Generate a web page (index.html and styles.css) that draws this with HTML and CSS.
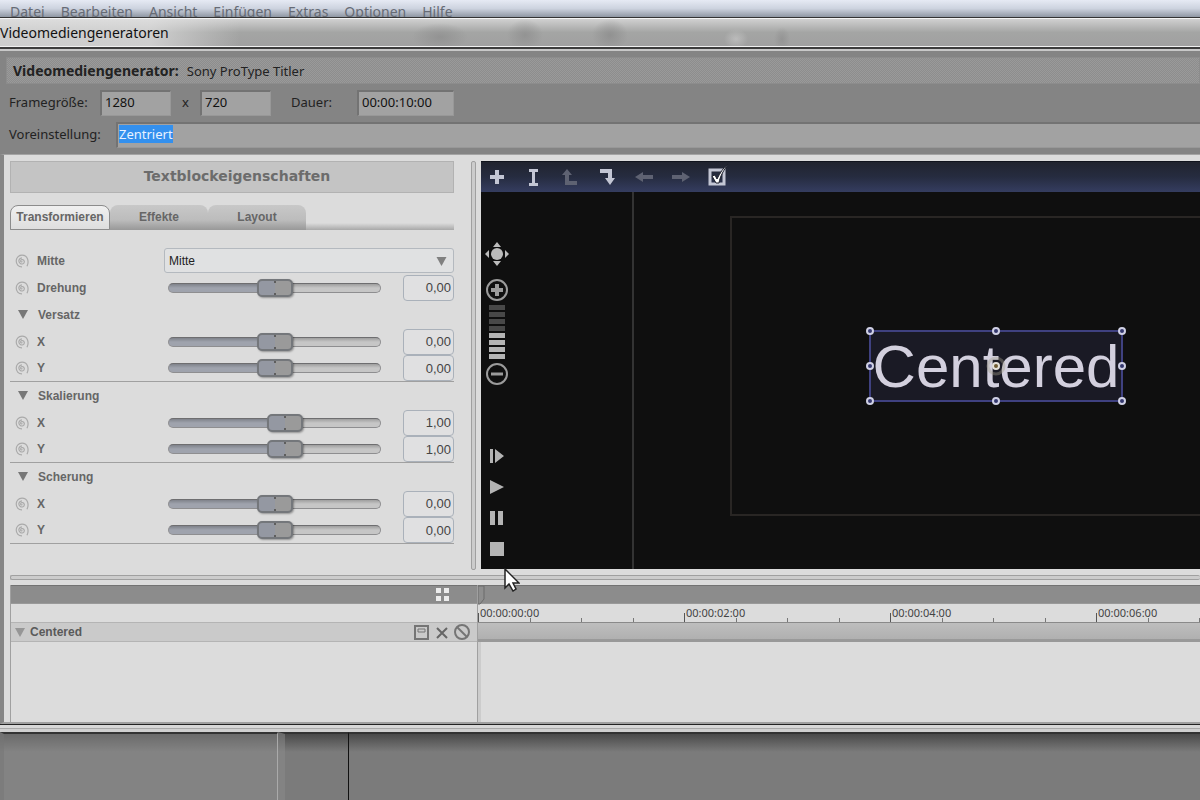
FILE: index.html
```html
<!DOCTYPE html>
<html lang="de">
<head>
    <meta charset="UTF-8">
    <meta name="viewport" content="width=device-width, initial-scale=1.0">
    <title>Videomediengeneratoren</title>
    <link rel="stylesheet" href="styles.css">
</head>
<body>
    <svg class="sprite" aria-hidden="true">
        <symbol id="spiral" viewBox="0 0 14 14">
            <path d="M7.500 7.500c-.8 1-2.300.2-1.800-1 .6-1.600 3.300-1.200 3.600.8.300 2.400-2.500 3.300-4 2.200C2.800 7.600 3.800 4 7 3.800M7 12.800C-.6 13-.8 1.200 7 1.200c5.500 0 7.400 6 5 11" fill="none" stroke="currentColor" stroke-width="1.200"/>
        </symbol>
        <symbol id="triangle" viewBox="0 0 10 9">
            <path d="M0 0h10L5 9z" fill="currentColor"/>
        </symbol>
    </svg>

    <nav class="menubar">
        <a href="#">Datei</a>
        <a href="#">Bearbeiten</a>
        <a href="#">Ansicht</a>
        <a href="#">Einfügen</a>
        <a href="#">Extras</a>
        <a href="#">Optionen</a>
        <a href="#">Hilfe</a>
    </nav>

    <main class="dialog">
        <h1 class="titlebar">Videomediengeneratoren</h1>

        <form class="generator">
            <div class="generator-name"><strong>Videomediengenerator:</strong> <span>Sony ProType Titler</span></div>
            <div class="form-row">
                <label class="size-label" for="frameWidth">Framegröße:</label>
                <input class="field" type="text" id="frameWidth" value="1280">
                <label class="times" for="frameHeight">x</label>
                <input class="field" type="text" id="frameHeight" value="720">
                <label class="duration-label" for="duration">Dauer:</label>
                <input class="field field-duration" type="text" id="duration" value="00:00:10:00">
            </div>
            <div class="form-row">
                <label class="preset-label" for="preset">Voreinstellung:</label>
                <input class="field field-preset" type="text" id="preset" value="Zentriert">
            </div>
        </form>

        <div class="editor">
            <div class="workspace">
                <section class="properties">
                    <h2>Textblockeigenschaften</h2>
                    <div class="tabs">
                        <button type="button" class="tab active">Transformieren</button>
                        <button type="button" class="tab">Effekte</button>
                        <button type="button" class="tab">Layout</button>
                    </div>

                    <div class="rows">
                        <div class="row">
                            <svg class="spiral"><use href="#spiral"/></svg>
                            <label for="anchor">Mitte</label>
                            <div class="select">
                                <select id="anchor"><option>Mitte</option></select>
                                <svg class="select-arrow"><use href="#triangle"/></svg>
                            </div>
                        </div>
                        <div class="row">
                            <svg class="spiral"><use href="#spiral"/></svg>
                            <label for="rotation">Drehung</label>
                            <input type="range" id="rotation" value="50" style="--fill: 50%">
                            <input type="text" class="value" value="0,00" aria-label="Drehung">
                        </div>
                    </div>

                    <div class="rows group">
                        <div class="row">
                            <svg class="triangle"><use href="#triangle"/></svg>
                            <h3>Versatz</h3>
                        </div>
                        <div class="row">
                            <svg class="spiral"><use href="#spiral"/></svg>
                            <label for="offsetX">X</label>
                            <input type="range" id="offsetX" value="50" style="--fill: 50%">
                            <input type="text" class="value" value="0,00" aria-label="Versatz X">
                        </div>
                        <div class="row">
                            <svg class="spiral"><use href="#spiral"/></svg>
                            <label for="offsetY">Y</label>
                            <input type="range" id="offsetY" value="50" style="--fill: 50%">
                            <input type="text" class="value" value="0,00" aria-label="Versatz Y">
                        </div>
                    </div>

                    <div class="rows group">
                        <div class="row">
                            <svg class="triangle"><use href="#triangle"/></svg>
                            <h3>Skalierung</h3>
                        </div>
                        <div class="row">
                            <svg class="spiral"><use href="#spiral"/></svg>
                            <label for="scaleX">X</label>
                            <input type="range" id="scaleX" value="56" style="--fill: 56%">
                            <input type="text" class="value" value="1,00" aria-label="Skalierung X">
                        </div>
                        <div class="row">
                            <svg class="spiral"><use href="#spiral"/></svg>
                            <label for="scaleY">Y</label>
                            <input type="range" id="scaleY" value="56" style="--fill: 56%">
                            <input type="text" class="value" value="1,00" aria-label="Skalierung Y">
                        </div>
                    </div>

                    <div class="rows group">
                        <div class="row">
                            <svg class="triangle"><use href="#triangle"/></svg>
                            <h3>Scherung</h3>
                        </div>
                        <div class="row">
                            <svg class="spiral"><use href="#spiral"/></svg>
                            <label for="shearX">X</label>
                            <input type="range" id="shearX" value="50" style="--fill: 50%">
                            <input type="text" class="value" value="0,00" aria-label="Scherung X">
                        </div>
                        <div class="row">
                            <svg class="spiral"><use href="#spiral"/></svg>
                            <label for="shearY">Y</label>
                            <input type="range" id="shearY" value="50" style="--fill: 50%">
                            <input type="text" class="value" value="0,00" aria-label="Scherung Y">
                        </div>
                    </div>
                </section>

                <div class="splitter"></div>

                <section class="preview">
                    <div class="toolbar">
                        <button type="button" aria-label="Textblock hinzufügen">
                            <svg viewBox="0 0 20 24"><path d="M8 5h4v5h5v4h-5v5H8v-5H3v-4h5z" fill="#c3c6d4"/></svg>
                        </button>
                        <button type="button" aria-label="Text bearbeiten">
                            <svg viewBox="0 0 20 24"><path d="M5 4h9v3h-3v11h3v3H5v-3h3V7H5z" fill="#c3c6d4"/></svg>
                        </button>
                        <button type="button" disabled aria-label="Nach oben">
                            <svg viewBox="0 0 20 24"><path d="M6 4l5 6H8v6h8v4H4v-10H1z" fill="#5e6272"/></svg>
                        </button>
                        <button type="button" aria-label="Nach unten">
                            <svg viewBox="0 0 20 24"><path d="M2 4h12v9h3l-5 7-5-7h3V8H2z" fill="#c3c6d4"/></svg>
                        </button>
                        <button type="button" disabled aria-label="Zurück">
                            <svg viewBox="0 0 20 24"><path d="M0 12l8-5v3h10v4H8v3z" fill="#5e6272"/></svg>
                        </button>
                        <button type="button" disabled aria-label="Vor">
                            <svg viewBox="0 0 20 24"><path d="M18 12l-8-5v3H0v4h10v3z" fill="#5e6272"/></svg>
                        </button>
                        <button type="button" aria-label="Sicherer Bereich">
                            <svg viewBox="0 0 20 24"><path d="M1 5h14v14H1z" fill="none" stroke="#c3c6d4" stroke-width="3"/><path d="M3 11l3-1 2 4c3-6 6-11 11-15-4 6-8 12-9 19H7z" fill="#fff" stroke="#1c1f2b" stroke-width="1"/></svg>
                        </button>
                    </div>
                    <div class="preview-body">
                        <div class="side-tools">
                            <div class="side-group zoom-tools">
                                <button type="button" aria-label="Ansicht verschieben">
                                    <svg width="26" height="26" viewBox="0 0 26 26" fill="#bcbcbc"><circle cx="13" cy="13" r="6"/><path d="M13 1l4 5H9zM13 25l4-5H9zM1 13l4-4v8zM25 13l-4-4v8z"/></svg>
                                </button>
                                <button type="button" aria-label="Vergrößern">
                                    <svg width="24" height="24" viewBox="0 0 24 24" stroke="#9b9b9b" fill="none"><circle cx="12" cy="12" r="10" stroke-width="2"/><path d="M12 6v12M6 12h12" stroke-width="4"/></svg>
                                </button>
                                <div class="zoom-level">
                                    <span></span><span></span><span></span><span></span>
                                    <span class="on"></span><span class="on"></span><span class="on"></span><span class="on"></span>
                                </div>
                                <button type="button" aria-label="Verkleinern">
                                    <svg width="24" height="24" viewBox="0 0 24 24" stroke="#9b9b9b" fill="none"><circle cx="12" cy="12" r="10" stroke-width="2"/><path d="M6 12h12" stroke-width="3"/></svg>
                                </button>
                            </div>
                            <div class="side-group play-tools">
                                <button type="button" aria-label="Von Anfang an">
                                    <svg width="14" height="14" viewBox="0 0 14 14" fill="#b4b4b4"><path d="M0 0h3v14H0zM5 0l9 7-9 7z"/></svg>
                                </button>
                                <button type="button" aria-label="Wiedergabe">
                                    <svg width="14" height="14" viewBox="0 0 14 14" fill="#b4b4b4"><path d="M0 0l14 7-14 7z"/></svg>
                                </button>
                                <button type="button" aria-label="Pause">
                                    <svg width="14" height="14" viewBox="0 0 14 14" fill="#b4b4b4"><path d="M0 0h5v14H0zM8 0h5v14H8z"/></svg>
                                </button>
                                <button type="button" aria-label="Stopp">
                                    <svg width="14" height="14" viewBox="0 0 14 14" fill="#b4b4b4"><path d="M0 0h14v14H0z"/></svg>
                                </button>
                            </div>
                        </div>
                        <div class="stage">
                            <div class="frame">
                                <div class="text-block">
                                    <span>Centered</span>
                                    <svg viewBox="0 0 254 72" aria-hidden="true">
                                        <circle cx="127" cy="36" r="8" fill="none" stroke="#a09a88" stroke-opacity=".4" stroke-width="3"/>
                                        <g fill="#34386e" stroke="#cfd0e4" stroke-width="2">
                                            <circle cx="1" cy="1" r="3"/><circle cx="127" cy="1" r="3"/><circle cx="253" cy="1" r="3"/>
                                            <circle cx="1" cy="36" r="3"/><circle cx="253" cy="36" r="3"/>
                                            <circle cx="1" cy="71" r="3"/><circle cx="127" cy="71" r="3"/><circle cx="253" cy="71" r="3"/>
                                        </g>
                                        <circle cx="127" cy="36" r="3" fill="#6e5b34" stroke="#e4e0da" stroke-width="2"/>
                                    </svg>
                                </div>
                            </div>
                        </div>
                    </div>
                </section>
            </div>

            <div class="splitter splitter-horizontal"></div>

            <section class="timeline">
                <div class="tracks">
                    <div class="band">
                        <button type="button" aria-label="Ansicht">
                            <svg width="13" height="13" viewBox="0 0 13 13" fill="#ececec"><path d="M0 0h5v5H0zM8 0h5v5H8zM0 8h5v5H0zM8 8h5v5H8z"/></svg>
                        </button>
                    </div>
                    <div class="track-space"></div>
                    <div class="track">
                        <svg class="triangle"><use href="#triangle"/></svg>
                        <span class="track-name">Centered</span>
                        <button type="button" aria-label="Spur speichern">
                            <svg width="15" height="15" viewBox="0 0 15 15" fill="none" stroke="#757575"><path d="M1 1h13v13H1z" stroke-width="2"/><path d="M4 4h7v3H4z"/></svg>
                        </button>
                        <button type="button" aria-label="Spur löschen">
                            <svg width="15" height="15" viewBox="0 0 15 15" fill="none" stroke="#666"><path d="M3 3l10 10M13 3L3 13" stroke-width="2"/></svg>
                        </button>
                        <button type="button" aria-label="Spur stummschalten">
                            <svg width="16" height="16" viewBox="0 0 16 16" fill="none" stroke="#757575" stroke-width="2"><circle cx="8" cy="8" r="7"/><path d="M3 3l10 10"/></svg>
                        </button>
                    </div>
                </div>
                <div class="time">
                    <div class="band">
                        <svg width="7" height="19" viewBox="0 0 7 19"><path d="M0 0h6v13l-4 5H0z" fill="#8e8e8e" stroke="#6b6b6b"/></svg>
                    </div>
                    <div class="ruler">
                        <span class="mark">00:00:00:00</span>
                        <span class="mark">00:00:02:00</span>
                        <span class="mark">00:00:04:00</span>
                        <span class="mark">00:00:06:00</span>
                    </div>
                    <div class="lane"></div>
                    <div class="lane-space"></div>
                </div>
            </section>
        </div>
    </main>

    <div class="desktop">
        <div class="pane pane-left"></div>
        <div class="pane pane-middle"></div>
        <div class="pane pane-main"></div>
    </div>

    <svg class="cursor" width="16" height="24" viewBox="0 0 16 24" aria-hidden="true">
        <path d="M1 1v19l4-4 4 7 3-2-3-6h6z" fill="#fff" stroke="#222" stroke-width="1.500"/>
    </svg>

    <script>
        // preset name starts out selected
        document.getElementById('preset').select();
    </script>
</body>
</html>
```
FILE: styles.css
```css
:root {
    --surface: #dcdcdc;
    --dialog-color: #848484;
    --field-color: #a2a2a2;
    --muted-text: #666;
    --line: #a0a0a0;
}

* {
    box-sizing: border-box;
    margin: 0;
    padding: 0;
}

body {
    position: relative;
    display: flex;
    flex-direction: column;
    min-height: 100vh;
    overflow-x: hidden;
    background-color: #7b7b7b;
    color: #222;
    font-family: "Noto Sans", "Open Sans", sans-serif;
    font-size: 13px;
}

button {
    display: flex;
    flex-shrink: 0;
    background: none;
    border: none;
}

input,
select {
    font: inherit;
    color: inherit;
    outline: none;
}

.sprite {
    position: absolute;
    width: 0;
    height: 0;
}

/* Main window menu */
.menubar {
    display: flex;
    gap: 16px;
    height: 17px;
    padding: 3px 10px 0;
    background: linear-gradient(#e6eaf4, #cdd3df 50%, #8f97a3);
}

.menubar a {
    color: #666b75;
    font-size: 14px;
    line-height: 18px;
    text-decoration: none;
}

/* Dialog */
.dialog {
    flex: 1;
    display: flex;
    flex-direction: column;
    border-top: 1px solid #333;
}

.titlebar {
    height: 29px;
    border-top: 1px solid #f4f4f4;
    border-bottom: 1px solid #f0f0f0;
    background:
        radial-gradient(ellipse 28px 14px at 440px 18px, #8889, transparent),
        radial-gradient(ellipse 18px 16px at 525px 16px, #8889, transparent),
        radial-gradient(ellipse 18px 16px at 610px 16px, #888a, transparent),
        radial-gradient(ellipse 12px 10px at 736px 20px, #ccc9, transparent),
        radial-gradient(ellipse 8px 12px at 782px 20px, #8888, transparent),
        linear-gradient(90deg, #e2e2e2b0 150px, #e2e2e200 240px),
        linear-gradient(#d0d0d0, #a4a5a4 50%, #a0a0a0);
    color: #111;
    font-size: 14px;
    font-weight: 400;
    line-height: 28px;
}

.generator {
    display: flex;
    flex-direction: column;
    gap: 6px;
    padding: 6px 0 6px 6px;
    border-top: 2px solid #3c3c3c;
    background-color: var(--dialog-color);
    box-shadow: inset 0 2px #c8c8c8;
}

.generator-name {
    display: flex;
    gap: 8px;
    height: 27px;
    margin-top: 2px;
    padding-left: 6px;
    border: 1px solid #8c8c8c;
    background: repeating-conic-gradient(#9a9a9a 0 25%, #8d8d8d 0 50%) 0 0 / 2px 2px;
    line-height: 26px;
}

.generator-name strong {
    font-size: 14px;
}

.form-row {
    display: flex;
    align-items: center;
    padding-left: 3px;
    line-height: 24px;
}

.form-row label {
    height: 26px;
}

.field {
    width: 71px;
    height: 26px;
    padding: 0 3px 3px;
    border: 1px solid #989898;
    border-top: 2px solid #737373;
    border-left: 2px solid #737373;
    background-color: var(--field-color);
    color: #111;
    line-height: 18px;
}

.field::selection {
    background-color: #3390ee;
    color: #e8f2ff;
}

.field-duration {
    width: 97px;
}

.field-preset {
    flex: 1;
    padding: 0 1px 3px;
    border-right: none;
}

.size-label {
    width: 91px;
}

.times {
    width: 29px;
    text-align: center;
}

.duration-label {
    width: 86px;
    padding-left: 20px;
}

.preset-label {
    width: 107px;
}

/* Editor */
.editor {
    flex: 1;
    display: flex;
    flex-direction: column;
    gap: 5px;
    margin-bottom: 1px;
    padding: 6px 0 0 6px;
    border-top: 1px solid #a4a4a4;
    border-left: 4px solid #868686;
    border-bottom: 2px solid var(--line);
    background-color: var(--surface);
    box-shadow: 0 2px #222;
}

.workspace {
    display: flex;
    gap: 5px;
}

.splitter {
    width: 5px;
    margin-left: 12px;
    border: 1px solid var(--line);
    border-radius: 2px;
    background-color: #ccc;
}

.splitter-horizontal {
    width: auto;
    height: 5px;
    margin-left: 0;
    border-right: none;
}

.properties {
    width: 444px;
    padding-bottom: 26px;
    color: var(--muted-text);
    font-family: "Liberation Sans", Arial, sans-serif;
    font-size: 12px;
}

.properties h2 {
    height: 32px;
    padding-left: 10px;
    border: 1px solid #b2b2b2;
    background-color: #c4c4c4;
    color: #6c6c6c;
    font-family: "DejaVu Sans", Verdana, sans-serif;
    font-size: 14px;
    line-height: 28px;
    text-align: center;
}

.tabs {
    display: flex;
    height: 25px;
    margin: 12px 0 17px;
    background: linear-gradient(transparent 18px, #a8a8a8);
}

.tab {
    justify-content: center;
    align-items: center;
    width: 98px;
    padding-bottom: 1px;
    border-radius: 8px 8px 0 0;
    background: linear-gradient(#c8c8c8, #bcbcbc 60%, #989898);
    color: var(--muted-text);
    font-family: inherit;
    font-size: 12px;
    font-weight: bold;
}

.tab.active {
    width: 100px;
    border: 1px solid #8c8c8c;
    background: linear-gradient(#f0f0f0, #dedede);
}

.rows.group {
    border-bottom: 1px solid var(--line);
}

.row {
    display: flex;
    align-items: center;
    height: 27px;
    padding-left: 5px;
}

.group .row:last-child {
    height: 26px;
}

.row label,
.row h3 {
    width: 127px;
    font-size: 12px;
    font-weight: bold;
}

.spiral {
    width: 14px;
    height: 14px;
    margin-right: 8px;
    color: #aaa;
}

.triangle {
    width: 10px;
    height: 9px;
    margin: 0 10px 0 3px;
    color: #777;
}

.select {
    position: relative;
    flex: 1;
}

.select select {
    width: 100%;
    height: 25px;
    padding-left: 4px;
    appearance: none;
    border: 1px solid #b4b9bf;
    border-radius: 3px;
    background-color: #e0e1e2;
    color: #222;
}

.select-arrow {
    position: absolute;
    top: 9px;
    right: 7px;
    width: 11px;
    height: 9px;
    color: #808080;
    pointer-events: none;
}

input[type="range"] {
    width: 213px;
    height: 20px;
    margin: 0 22px 0 4px;
    appearance: none;
    background: none;
}

input[type="range"]::-webkit-slider-runnable-track {
    height: 10px;
    border: 1px solid #8e8e90;
    border-top-color: #6e6e70;
    border-radius: 5px;
    background:
        linear-gradient(#0003, transparent 50%),
        linear-gradient(90deg, #9fa3ad var(--fill), #c6c6c6 var(--fill));
}

input[type="range"]::-webkit-slider-thumb {
    width: 36px;
    height: 18px;
    margin-top: -5px;
    appearance: none;
    border: 2px solid #74777b;
    border-radius: 5px;
    background:
        linear-gradient(#5e5e5e 2px, transparent 2px 12px, #5e5e5e 12px) 50% 0 / 2px 14px no-repeat,
        linear-gradient(90deg, transparent 50%, #9a9a9a 50%) 0 0 / 100% 100%,
        #9498a2;
    box-shadow: 1px 1px 2px #0005;
}

.value {
    width: 51px;
    height: 26px;
    padding-right: 2px;
    border: 1px solid #aab1ba;
    border-radius: 4px;
    background-color: #e0e0e1;
    color: #444;
    font-size: 13px;
    text-align: right;
}

/* Preview */
.preview {
    flex: 1;
    display: flex;
    flex-direction: column;
    min-width: 0;
    margin-bottom: 1px;
    background-color: #0f0f0f;
}

.toolbar {
    display: flex;
    align-items: center;
    gap: 17px;
    height: 31px;
    padding-left: 6px;
    border-top: 1px solid #10131c;
    background: linear-gradient(#20232e, #262c40 50%, #353d60);
}

.toolbar svg {
    width: 20px;
    height: 24px;
    overflow: visible;
}

.preview-body {
    flex: 1;
    display: flex;
}

.side-tools {
    display: flex;
    flex-direction: column;
    justify-content: space-between;
    width: 153px;
    padding: 49px 3px 13px;
    border-right: 2px solid #333;
}

.side-group {
    display: flex;
    flex-direction: column;
    align-items: center;
    width: 26px;
}

.zoom-tools button:first-child {
    margin-bottom: 11px;
}

.zoom-level {
    display: grid;
    gap: 2px;
    width: 16px;
    margin: 3px 0;
}

.zoom-level span {
    height: 5px;
    background-color: #484848;
}

.zoom-level .on {
    background-color: #b4b4b4;
}

.play-tools {
    gap: 17px;
}

.stage {
    position: relative;
    flex: 1;
    overflow: hidden;
}

.frame {
    position: absolute;
    top: 24px;
    left: 96px;
    width: 532px;
    height: 300px;
    border: 2px solid #292624;
}

.text-block {
    position: absolute;
    top: 112px;
    left: 137px;
    width: 254px;
    height: 72px;
    border: 2px solid #3f4180;
    background-color: #1a1a25;
    color: #d3d0de;
    font-family: "Liberation Sans", Arial, sans-serif;
    font-size: 60px;
    line-height: 70px;
    text-align: center;
}

.text-block svg {
    position: absolute;
    top: -2px;
    left: -2px;
    width: 254px;
    height: 72px;
    overflow: visible;
}

/* Timeline */
.timeline {
    flex: 1;
    display: flex;
    border-left: 1px solid var(--line);
}

.tracks {
    width: 467px;
    border-right: 1px solid var(--line);
}

.band {
    display: flex;
    height: 19px;
    border-top: 1px solid #727272;
    border-bottom: 1px solid #999;
    background-color: #8c8c8c;
}

.tracks .band {
    justify-content: flex-end;
    align-items: center;
    padding-right: 28px;
}

.track-space {
    height: 18px;
}

.track {
    display: flex;
    align-items: center;
    gap: 5px;
    height: 20px;
    padding: 0 7px 0 1px;
    border-top: 1px solid #b4b4b4;
    border-bottom: 1px solid #b4b4b4;
    background-color: #cacaca;
    font-family: "Liberation Sans", Arial, sans-serif;
}

.track .triangle {
    margin-right: 0;
    color: #969696;
}

.track-name {
    flex: 1;
    color: #5a5a5a;
    font-size: 12px;
    font-weight: bold;
}

.time {
    flex: 1;
    display: flex;
    flex-direction: column;
    min-width: 0;
}

.ruler {
    display: flex;
    height: 19px;
    overflow: hidden;
    border-bottom: 1px solid #8a8a8a;
}

.mark {
    flex: 0 0 206px;
    padding-left: 2px;
    background:
        linear-gradient(#555, #555) 0 100% / 1px 9px no-repeat,
        linear-gradient(#777, #777) 52px 100% / 1px 4px no-repeat,
        linear-gradient(#777, #777) 103px 100% / 1px 4px no-repeat,
        linear-gradient(#777, #777) 155px 100% / 1px 4px no-repeat;
    color: #444;
    font-size: 11px;
    line-height: 17px;
}

.lane {
    height: 19px;
    border-bottom: 3px solid #999;
    background: linear-gradient(#bebebe, #b0b0b0);
}

.lane-space {
    flex: 1;
    border-left: 3px solid #ccc;
}

/* Project window behind the dialog */
.desktop {
    display: flex;
    height: 75px;
    padding-top: 7px;
    background:
        linear-gradient(#d8d8d8 3px, #aaa 3px 4px, #d0d0d0 4px) 0 0 / 100% 7px no-repeat,
        linear-gradient(#444 7px, #7b7b7b 27px);
}

.pane {
    border-top: 2px solid #333;
}

.pane-left {
    width: 278px;
    border-left: 4px solid #7778;
    border-right: 1px solid #aaa;
    background-color: #8c8c8c80;
}

.pane-middle {
    width: 71px;
    border-left: 7px solid #8c8c8c80;
    border-right: 1px solid #111;
}

.pane-main {
    flex: 1;
}

.cursor {
    position: absolute;
    top: 568px;
    left: 504px;
    pointer-events: none;
}
```
